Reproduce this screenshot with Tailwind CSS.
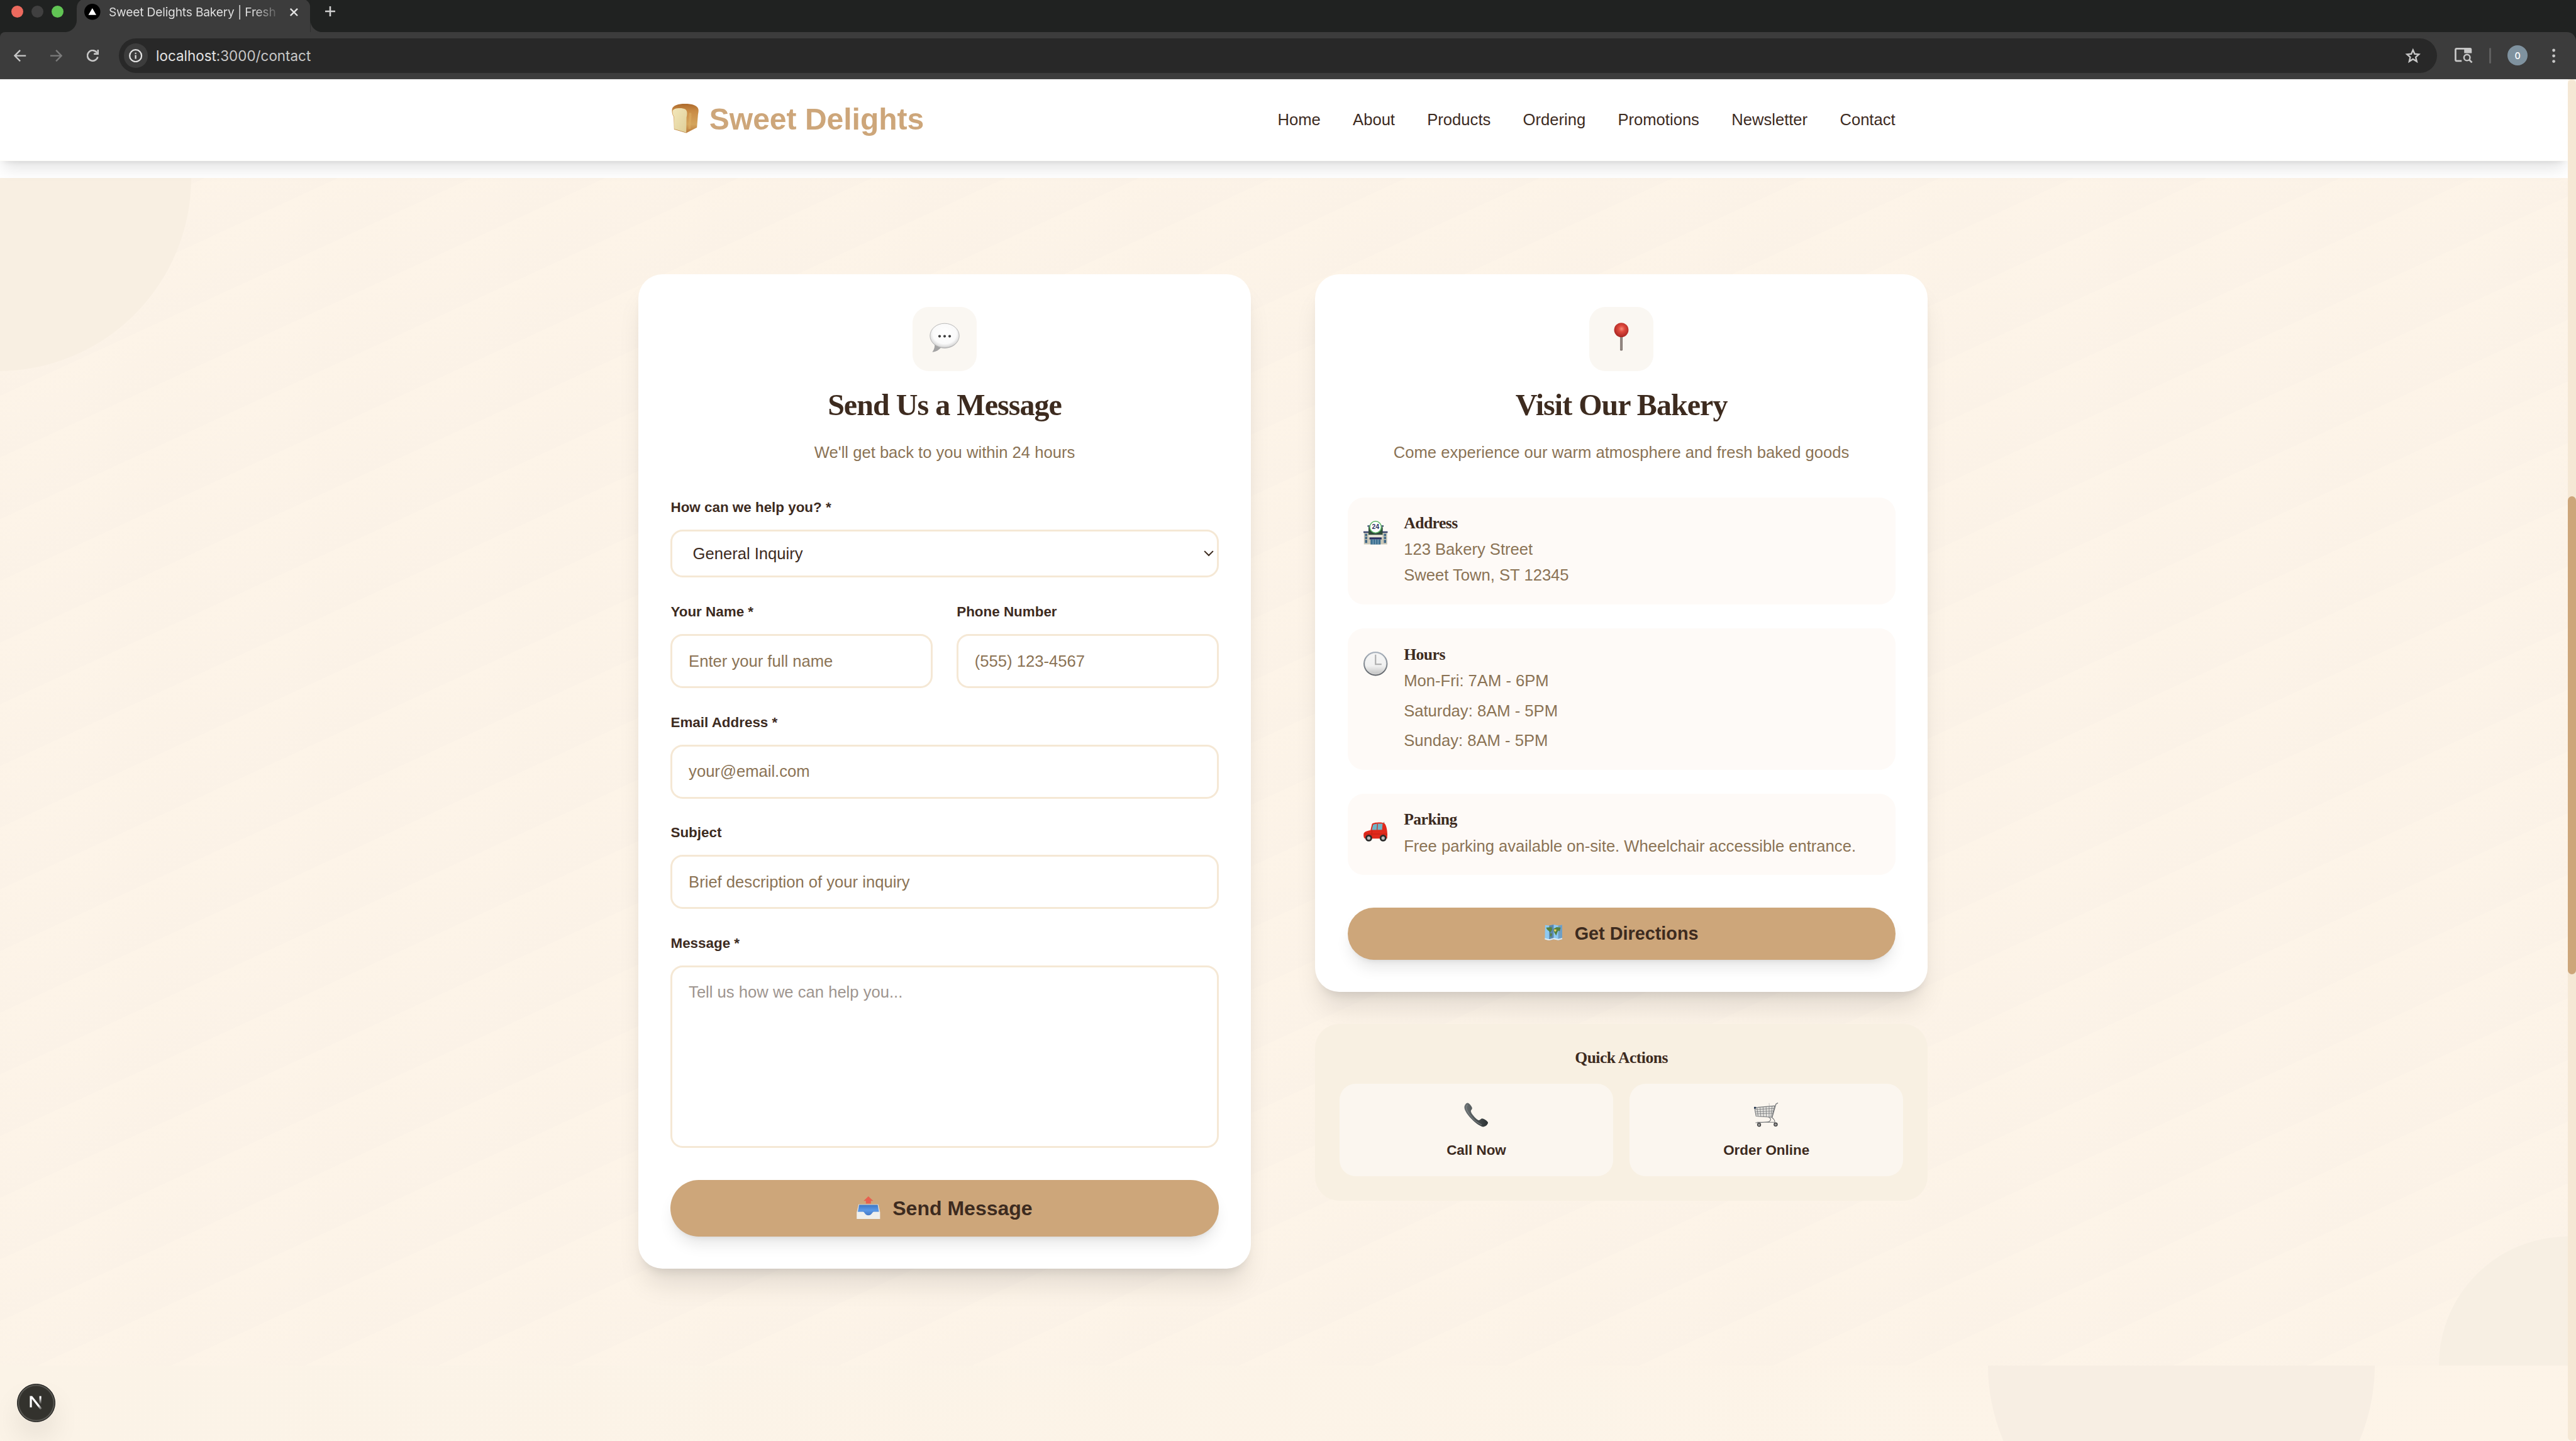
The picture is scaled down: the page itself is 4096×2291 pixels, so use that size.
<!DOCTYPE html>
<html lang="en">
<head>
<meta charset="utf-8">
<title>Sweet Delights Bakery | Fresh Baked Goods</title>
<script src="https://cdn.jsdelivr.net/npm/@tailwindcss/browser@4"></script>
</head>
<body class="overflow-hidden bg-[#fcf3e8]">
<div class="flex h-[1430.8px] w-[2558px] flex-col overflow-hidden font-['Liberation_Sans',sans-serif] text-base text-[#3d2b1f] [zoom:1.6013]">

  <!-- Browser tab strip -->
  <div class="relative flex h-8 shrink-0 items-start bg-[#202221] font-[Inter,sans-serif]">
    <div class="flex w-[76px] gap-2 pt-[5.5px] pl-[11px]">
      <span class="size-3 rounded-full bg-[#ec6a5e]"></span>
      <span class="size-3 rounded-full bg-[#404040]"></span>
      <span class="size-3 rounded-full bg-[#61c554]"></span>
    </div>
    <div class="relative h-8 w-[232px] bg-[#3c3c3c]">
      <svg class="absolute top-0 left-0 h-8 w-[232px] overflow-visible" viewBox="0 0 232 32">
        <path d="M0 0H4.2A10 10 0 0 0 0 8.2Z" fill="#202221"/>
        <path d="M232 0H227.8A10 10 0 0 1 232 8.2Z" fill="#202221"/>
        <path d="M0 20V32H-12A12 12 0 0 0 0 20Z" fill="#3c3c3c"/>
        <path d="M232 20V32H244A12 12 0 0 1 232 20Z" fill="#3c3c3c"/>
      </svg>
      <div class="relative flex h-6 items-center pl-2">
        <svg class="size-4" viewBox="0 0 16 16"><circle cx="8" cy="8" r="8" fill="#000"/><path d="M8 4.3 11.9 11.1H4.1Z" fill="#fff"/></svg>
        <div class="ml-2 w-[168px] bg-gradient-to-r from-[#e3e3e3] from-85% to-[#e3e3e3]/15 bg-clip-text text-[12px] tracking-[-0.010em] whitespace-nowrap text-transparent">Sweet Delights Bakery | Fresh</div>
        <svg class="ml-3 size-2" viewBox="0 0 8 8" fill="none" stroke="#e3e3e3" stroke-width="1.5"><path d="M.5.5l7 7M7.5.5l-7 7"/></svg>
      </div>
    </div>
    <svg class="mt-1.5 ml-[15px] size-2.5" viewBox="0 0 10 10" fill="none" stroke="#d0d0d0" stroke-width="1.6"><path d="M5 0v10M0 5h10"/></svg>
  </div>

  <!-- Browser toolbar -->
  <div class="shrink-0 bg-[#202221]">
  <div class="flex h-[47px] items-center rounded-tl-[5px] rounded-tr-[9px] border-b border-[#474747] bg-[#3c3c3c] font-[Inter,sans-serif]">
    <svg class="ml-3.5 h-3 w-3" viewBox="0 0 12 12" fill="none" stroke="#c7c7c7" stroke-width="1.5"><path d="M12 6H1M6.3.6.9 6l5.4 5.4"/></svg>
    <svg class="ml-6 h-3 w-3" viewBox="0 0 12 12" fill="none" stroke="#7b7b7b" stroke-width="1.5"><path d="M0 6h11M5.7.6 11.1 6l-5.400 5.400"/></svg>
    <svg class="ml-6 h-3 w-3" viewBox="0 0 12 12" fill="none" stroke="#c7c7c7" stroke-width="1.6"><path d="M10.900 7.200A5.200 5.200 0 1 1 10.200 3"/><path d="M11.200 0v4.200H7" stroke-width="1.7"/></svg>
    <div class="ml-5 flex h-[34px] w-[2302px] items-center rounded-full bg-[#282828] pr-[16px] pl-[5px]">
      <span class="flex size-6 items-center justify-center rounded-full bg-[#3c3c3c]">
        <svg class="size-[13.300px]" viewBox="0 0 13.300 13.300" fill="none" stroke="#e3e3e3"><circle cx="6.650" cy="6.650" r="5.900" stroke-width="1.400"/><path d="M6.650 5.900v3.800M6.650 3.600v1.300" stroke-width="1.400"/></svg>
      </span>
      <span class="ml-2 text-[14px] text-[#c7c7c7]"><span class="text-[#e3e3e3]">localhost</span>:3000/contact</span>
      <svg class="ml-auto size-4" viewBox="0 0 16 16" fill="none" stroke="#c7c7c7" stroke-width="1.500"><path d="M8 2.200 9.700 6.100 13.900 6.500 10.700 9.300 11.700 13.500 8 11.200 4.300 13.500 5.300 9.300 2.100 6.500 6.300 6.100Z"/></svg>
    </div>
    <svg class="ml-[17.500px] h-[15px] w-[18px]" viewBox="0 0 18 15" fill="none" stroke="#c7c7c7"><path d="M7 13H2A1.200 1.200 0 0 1 .900 11.900V2A1.200 1.200 0 0 1 2 .900H15.500" stroke-width="1.700"/><path d="M9.500 0H15.700A1.400 1.400 0 0 1 17 1.400V5.300H9.500Z" fill="#c7c7c7" stroke="none"/><circle cx="12.300" cy="9.700" r="3" stroke-width="1.500"/><path d="M14.500 11.900 17.200 14.600" stroke-width="1.700"/></svg>
    <span class="ml-[16.500px] h-4 w-0.5 rounded-full bg-[#5f5f5f]"></span>
    <span class="ml-4 flex size-5 items-center justify-center rounded-full bg-[#7f929f] text-[9px] font-medium text-white">0</span>
    <svg class="ml-5 h-4 w-3" viewBox="0 0 12 16" fill="#c7c7c7"><circle cx="6" cy="2.500" r="1.500"/><circle cx="6" cy="8" r="1.500"/><circle cx="6" cy="13.500" r="1.500"/></svg>
  </div>
  </div>

  <!-- Page viewport -->
  <div class="flex min-h-0 flex-1">
    <div class="relative flex w-[2550px] flex-col overflow-hidden bg-white">
      <header class="relative z-10 h-[81px] shrink-0 border-b border-[#fdfcf8] bg-white pr-0.5 pb-px shadow-[0_10px_15px_-3px_rgba(0,0,0,.12),0_4px_6px_-4px_rgba(0,0,0,.1)]">
        <div class="mx-auto flex h-full w-[1280px] items-center justify-between px-8">
          <div class="flex items-center text-[30px] leading-9 font-bold text-[#cda67a]">
            <svg class="mr-[10.300px] -mt-0.5 ml-px h-[29px] w-[27px]" viewBox="0 0 56 58" preserveAspectRatio="none">
              <defs>
                <linearGradient id="crust" x1="0" y1="0" x2="0" y2="1"><stop offset="0" stop-color="#ad6a2c"/><stop offset=".25" stop-color="#c98b45"/><stop offset=".7" stop-color="#d4a45c"/><stop offset="1" stop-color="#b9793a"/></linearGradient>
                <linearGradient id="crumb" x1="0" y1="0" x2="1" y2="1"><stop offset="0" stop-color="#f3e7bb"/><stop offset="1" stop-color="#dfcf98"/></linearGradient>
              </defs>
              <path d="M1 10C3 3 14 0 27 0 42 0 53 3 55 11 56 16 54 20 54 24L52 47 30 58 5 51 4 26C1 21 0 15 1 10Z" fill="url(#crust)"/>
              <path d="M2 14C3 8 22 7 28 11 33 14 32 22 30.500 27L30 57 5.500 50 5 26C2.500 22 1.500 18 2 14Z" fill="url(#crumb)"/>
              <path d="M38 18C39 28 36 40 37 50" stroke="#e3b568" stroke-width="5" opacity=".45" fill="none"/>
            </svg>
            <span>Sweet Delights</span>
          </div>
          <nav class="flex gap-8">
            <a>Home</a><a>About</a><a>Products</a><a>Ordering</a><a>Promotions</a><a>Newsletter</a><a>Contact</a>
          </nav>
        </div>
      </header>
      <div class="h-[16.500px] shrink-0"></div>

      <!-- Contact section -->
      <section class="relative shrink-0 overflow-hidden bg-[repeating-linear-gradient(155.200deg,#fdf4e8_-26px,#fbf2e7_29.600px)] py-24 pr-0.5">
        <div class="absolute -top-48 -left-[194px] size-96 rounded-full bg-[#f8efe2]"></div>
        <div class="absolute -right-32 -bottom-32 size-64 rounded-full bg-[#f7efe3]"></div>
        <div class="relative mx-auto grid w-[1280px] grid-cols-2 items-start gap-16">

          <!-- Message form -->
          <div class="rounded-3xl bg-white p-8 shadow-[0_20px_25px_-5px_rgba(0,0,0,.1),0_8px_10px_-6px_rgba(0,0,0,.1)]">
            <div class="mb-[30.400px] flex flex-col items-center">
              <div class="flex size-16 items-center justify-center rounded-2xl bg-[#faf7f2]">
                <svg class="-mt-0.5 h-[30px] w-[30px]" viewBox="0 0 60 60">
                  <defs><radialGradient id="bub" cx=".5" cy=".42" r=".58"><stop offset="0" stop-color="#fff"/><stop offset=".7" stop-color="#fafafa"/><stop offset=".9" stop-color="#dedede"/><stop offset="1" stop-color="#b0b0b0"/></radialGradient></defs>
                  <path d="M10 42C11 48 9 54 5.500 58.500 13 58 19 54 23 49Z" fill="#a3a3a3"/>
                  <ellipse cx="30" cy="26" rx="29" ry="24.500" fill="url(#bub)" stroke="#aaa" stroke-width="1"/>
                  <g fill="#3c3c3c"><circle cx="20" cy="27" r="2.600"/><circle cx="30" cy="27" r="2.600"/><circle cx="40" cy="27" r="2.600"/></g>
                </svg>
              </div>
              <h2 class="mt-[15.400px] font-['Liberation_Serif',serif] text-[30px] leading-9 font-bold tracking-[-0.020em]">Send Us a Message</h2>
              <p class="mt-[16.600px] leading-[25.600px] text-[#8b7355]">We'll get back to you within 24 hours</p>
            </div>
            <div class="flex flex-col gap-[22.600px]">
              <div>
                <label class="mb-[10.700px] block pt-[0.400px] text-sm leading-[22.400px] font-bold">How can we help you? *</label>
                <div class="flex h-[47.500px] items-center justify-between rounded-xl border-2 border-[#f5e8d5] pr-[3px] pl-5">
                  <span>General Inquiry</span>
                  <svg class="h-[6px] w-[10px]" viewBox="0 0 10 6" fill="none" stroke="#3d2b1f" stroke-width="1.300"><path d="M.7.7 5 5 9.300.7"/></svg>
                </div>
              </div>
              <div class="grid grid-cols-2 gap-6">
                <div>
                  <label class="mb-[10.700px] block pt-[0.400px] text-sm leading-[22.400px] font-bold">Your Name *</label>
                  <div class="flex h-[53.600px] items-center rounded-xl border-2 border-[#f5e8d5] px-4 text-[#8b7355]">Enter your full name</div>
                </div>
                <div>
                  <label class="mb-[10.700px] block pt-[0.400px] text-sm leading-[22.400px] font-bold">Phone Number</label>
                  <div class="flex h-[53.600px] items-center rounded-xl border-2 border-[#f5e8d5] px-4 text-[#8b7355]">(555) 123-4567</div>
                </div>
              </div>
              <div>
                <label class="mb-[10.700px] block pt-[0.400px] text-sm leading-[22.400px] font-bold">Email Address *</label>
                <div class="flex h-[53.600px] items-center rounded-xl border-2 border-[#f5e8d5] px-4 text-[#8b7355]">your@email.com</div>
              </div>
              <div>
                <label class="mb-[10.700px] block pt-[0.400px] text-sm leading-[22.400px] font-bold">Subject</label>
                <div class="flex h-[53.600px] items-center rounded-xl border-2 border-[#f5e8d5] px-4 text-[#8b7355]">Brief description of your inquiry</div>
              </div>
              <div>
                <label class="mb-[10.700px] block pt-[0.400px] text-sm leading-[22.400px] font-bold">Message *</label>
                <div class="h-[181.400px] rounded-xl border-2 border-[#f5e8d5] px-4 py-3 leading-[25.600px] text-[#9e958f]">Tell us how we can help you...</div>
              </div>
            </div>
            <div class="mt-[31.700px] flex h-14 items-center justify-center rounded-full bg-[#cda67a] text-xl font-bold shadow-[0_10px_15px_-3px_rgba(0,0,0,.1),0_4px_6px_-4px_rgba(0,0,0,.1)]">
              <svg class="mr-[12px] -mt-px h-[22.500px] w-[23.500px]" viewBox="0 0 47 45">
                <defs><linearGradient id="tray" x1="0" y1="0" x2="0" y2="1"><stop offset="0" stop-color="#3f78c4"/><stop offset=".5" stop-color="#5a97e6"/><stop offset="1" stop-color="#4579c6"/></linearGradient></defs>
                <path d="M4 16H43L46.500 31V45H.5V31Z" fill="#e4e4e2"/>
                <path d="M5 17H42L44.500 31 34 31C31 31 31 38 23.500 38S16 31 13 31L2.500 31Z" fill="url(#tray)"/>
                <path d="M.5 31H13C16 31 16 38 23.500 38S31 31 34 31H46.500V45H.5Z" fill="#f0efec"/>
                <path d="M23.500 0 33 9H28.500V14.500H18.500V9H14Z" fill="#e8604f"/>
              </svg>
              <span>Send Message</span>
            </div>
          </div>

          <div>
            <!-- Location card -->
            <div class="rounded-3xl bg-white p-8 shadow-[0_20px_25px_-5px_rgba(0,0,0,.1),0_8px_10px_-6px_rgba(0,0,0,.1)]">
              <div class="mb-[31.700px] flex flex-col items-center">
                <div class="flex size-16 items-center justify-center rounded-2xl bg-[#faf7f2]">
                  <svg class="-mt-1 h-[28px] w-[15px]" viewBox="0 0 30 56">
                    <defs><radialGradient id="pin" cx=".52" cy=".42" r=".6"><stop offset="0" stop-color="#f58a78"/><stop offset=".35" stop-color="#df4a3e"/><stop offset="1" stop-color="#a52320"/></radialGradient></defs>
                    <path d="M12.500 26H17.500V54A2.500 1.600 0 0 1 12.500 54Z" fill="#7d726c"/><path d="M14.500 28V54" stroke="#b8aea8" stroke-width="1.200"/>
                    <circle cx="15" cy="14.500" r="14.300" fill="url(#pin)"/>
                  </svg>
                </div>
                <h2 class="mt-[15.400px] font-['Liberation_Serif',serif] text-[30px] leading-9 font-bold tracking-[-0.020em]">Visit Our Bakery</h2>
                <p class="mt-[16.600px] leading-[25.600px] text-[#8b7355]">Come experience our warm atmosphere and fresh baked goods</p>
              </div>
              <div class="flex flex-col gap-6">
                <div class="flex gap-4 rounded-2xl bg-[#fefaf7] p-4">
                  <svg class="mt-[7.500px] size-6" viewBox="0 0 48 48">
                    <path d="M10 12H38V46H10Z" fill="#2f4a3a"/>
                    <path d="M8 9H14V12H8ZM34 9H40V12H34Z" fill="#3a4a6b"/>
                    <path d="M1 22H47V47H1Z" fill="#c9c6b6"/><path d="M0 21H11V24H0ZM37 21H48V24H37Z" fill="#39456e"/>
                    <path d="M10 14H38V28H10Z" fill="#2f4a3a"/>
                    <path d="M3 26H7.500V44H3ZM40.500 26H45V44H40.500Z" fill="#3f6787"/><path d="M3 31H8M3 37H8M40 31H46M40 37H46" stroke="#c9c6b6" stroke-width="1.500"/>
                    <path d="M10 28H38V33H10Z" fill="#e9e5d8"/><path d="M12 33H36V37H12Z" fill="#282f63"/><path d="M14 37H34V47H14Z" fill="#3c6f92"/><path d="M19 37V47M24 37V47M29 37V47" stroke="#a8c4d0" stroke-width="1"/>
                    <circle cx="24" cy="12.500" r="11.500" fill="#fff" stroke="#5cb567" stroke-width="2"/>
                    <text x="24" y="16.800" text-anchor="middle" font-family="Liberation Sans" font-weight="700" font-size="13" fill="#28315e">24</text>
                  </svg>
                  <div>
                    <h3 class="pt-[0.400px] font-['Liberation_Serif',serif] text-base leading-[19.200px] font-bold tracking-[-0.020em]">Address</h3>
                    <p class="mt-[3.600px] leading-[25.600px] text-[#8b7355]">123 Bakery Street<br>Sweet Town, ST 12345</p>
                  </div>
                </div>
                <div class="flex gap-4 rounded-2xl bg-[#fefaf7] p-4">
                  <svg class="mt-[7px] size-6" viewBox="0 0 48 48">
                    <defs><linearGradient id="rim" x1="0" y1="0" x2="0" y2="1"><stop offset="0" stop-color="#a9b3bf"/><stop offset="1" stop-color="#606368"/></linearGradient><linearGradient id="face" x1="0" y1="0" x2="0" y2="1"><stop offset="0" stop-color="#f6f6f6"/><stop offset=".6" stop-color="#f1f1f1"/><stop offset="1" stop-color="#c2c2c2"/></linearGradient></defs>
                    <circle cx="24" cy="24" r="24" fill="url(#rim)"/><circle cx="24" cy="24" r="21" fill="url(#face)" stroke="#e8e8e8" stroke-width="1"/>
                    <path d="M24 6V25H36" fill="none" stroke="#b2b2b2" stroke-width="2.800"/>
                  </svg>
                  <div class="leading-[25.600px] text-[#8b7355]">
                    <h3 class="pt-[0.400px] font-['Liberation_Serif',serif] text-base leading-[19.200px] font-bold tracking-[-0.020em] text-[#3d2b1f]">Hours</h3>
                    <p class="mt-[3.600px]">Mon-Fri: 7AM - 6PM</p>
                    <p class="mt-1">Saturday: 8AM - 5PM</p>
                    <p class="mt-1">Sunday: 8AM - 5PM</p>
                  </div>
                </div>
                <div class="flex gap-4 rounded-2xl bg-[#fefaf7] p-4">
                  <svg class="mt-[11.500px] h-[20px] w-6" viewBox="0 0 48 40">
                    <path d="M41 1 40 5" stroke="#555" stroke-width="1"/>
                    <path d="M17 5C21 1.500 38 1 42 4 46 8 47.500 20 47.500 26L47 34H3C0 33 0 27 .5 24 2 20 8 18.500 14 17.500Z" fill="#e0291c"/>
                    <path d="M19 6.500C23 4 31 4 38 4.500L37 16.500 16.500 17Z" fill="#6fb3c6"/><path d="M28 4.500 27 17" stroke="#c9281d" stroke-width="1.500"/>
                    <path d="M17 17.500 16 31M2 25H46" stroke="#b51c12" stroke-width="1.200" opacity=".7"/>
                    <circle cx="10.500" cy="33" r="6.700" fill="#2b2b2b"/><circle cx="10.500" cy="33" r="3.300" fill="#b8b8b8"/><circle cx="39" cy="33" r="6.700" fill="#2b2b2b"/><circle cx="39" cy="33" r="3.300" fill="#b8b8b8"/>
                  </svg>
                  <div>
                    <h3 class="pt-[0.400px] font-['Liberation_Serif',serif] text-base leading-[19.200px] font-bold tracking-[-0.020em]">Parking</h3>
                    <p class="mt-[3.600px] leading-[25.600px] text-[#8b7355]">Free parking available on-site. Wheelchair accessible entrance.</p>
                  </div>
                </div>
              </div>
              <div class="mt-8 flex h-[52px] items-center justify-center rounded-full bg-[#cda67a] text-lg font-bold shadow-[0_10px_15px_-3px_rgba(0,0,0,.1),0_4px_6px_-4px_rgba(0,0,0,.1)]">
                <svg class="mr-[12px] -mt-0.5 h-4 w-[18px]" viewBox="0 0 36 32">
                  <path d="M1 1 9 2 18 0 27 2 35 .5V29L27 31 18 29 9 31.500.5 29.500Z" fill="#8ec9f2"/>
                  <path d="M9 2 18 0V29L9 31.500Z" fill="#5b87ad"/><path d="M27 2 35 .5V29L27 31Z" fill="#6f9fc6"/>
                  <path d="M3 6 14 5 15 10 11 16 9 13 5 10ZM11 17 15 18 13 25 11 22ZM18 8 24 5 32 6 30 13 27 12 25 16 23 22 20 17 18 13Z" fill="#55803d"/><path d="M19 9 24 10 22 14 19 13Z" fill="#e7cf6a"/>
                  <path d="M.5 27 9 29 18 26.500 27 28.500 35 26.500V29L27 31 18 29 9 31.500.5 29.500Z" fill="#e6eef2"/>
                </svg>
                <span>Get Directions</span>
              </div>
            </div>

            <!-- Quick actions -->
            <div class="mt-8 rounded-3xl bg-[#f8efe2]/95 p-6">
              <h3 class="text-center font-['Liberation_Serif',serif] text-base leading-[19.200px] font-bold tracking-[-0.020em]">Quick Actions</h3>
              <div class="mt-4 grid grid-cols-2 gap-4">
                <div class="flex h-[92px] flex-col items-center rounded-2xl bg-[#fbf6ef] pt-[19px]">
                  <svg class="size-6" viewBox="0 0 48 48">
                    <defs><linearGradient id="ph" x1="0" y1="0" x2="1" y2="0"><stop offset="0" stop-color="#6b7173"/><stop offset="1" stop-color="#2b3133"/></linearGradient></defs>
                    <path d="M7 .5C10 .5 16 8 16 11 16 14 13.500 14 13.500 17.500 14 22 25 34.500 29 35 32 35 33 31.500 36 31.500 39 31.500 47.500 37 47.500 40 47 44 42 48 38 48 28 48 0 21 .5 9 .7 5 4 .5 7 .5Z" fill="url(#ph)"/>
                    <path d="M7 4C4 7 4 12 6 16 12 28 24 40 35 44" fill="none" stroke="#8a9092" stroke-width="1.500" opacity=".7"/>
                  </svg>
                  <span class="mt-[12px] text-sm leading-[22.400px] font-bold">Call Now</span>
                </div>
                <div class="flex h-[92px] flex-col items-center rounded-2xl bg-[#fbf6ef] pt-[19px]">
                  <svg class="size-6" viewBox="0 0 48 48" fill="none" stroke="#77797b">
                    <path d="M47.500.5 43.500 3 36 29" stroke-width="1.700"/><path d="M30 1 31 14" stroke="#bbb" stroke-width="1"/>
                    <path d="M1 10 41 6.500 35.500 29 4 27Z" fill="#e4e3df" stroke-width="1.300"/>
                    <path d="M1.500 14 40 11.500M2 18.500 39 16.500M3 22.500 37.500 21M6 10 8 27M12 9.500 13.500 27.500M18 9 19 28M24 8.500 24.500 28M30 8 30 28.500M36 7.500 33.500 28.500" stroke-width="1"/>
                    <path d="M29 29C36 32 33 38 26 38.500L3 40M35 29C40 33 42 36 41 39L6 39" stroke-width="1.400"/>
                    <circle cx="10" cy="44" r="3.200" fill="#999" stroke="#3b3b3b" stroke-width="1.600"/><circle cx="43" cy="43.500" r="3.200" fill="#999" stroke="#3b3b3b" stroke-width="1.600"/>
                    <path d="M0 8.500H4V12H0Z" fill="#24364f" stroke="none"/>
                  </svg>
                  <span class="mt-[12px] text-sm leading-[22.400px] font-bold">Order Online</span>
                </div>
              </div>
            </div>
          </div>
        </div>
      </section>

      <!-- Next section -->
      <section class="relative min-h-0 flex-1 overflow-hidden bg-[linear-gradient(155deg,#fbf3e7,#fdf4e8)]">
        <div class="absolute -top-48 left-[1974px] size-96 rounded-full bg-[#f7eee3]"></div>
      </section>

      <!-- Dev tools badge -->
      <div class="absolute bottom-[19px] left-[17px] z-20 flex size-[38px] items-center justify-center rounded-full border border-[#161616] bg-[#33322d] shadow-[inset_0_0_0_1.500px_#55544f,0_16px_32px_-8px_rgba(0,0,0,.24)]">
        <svg class="h-[15px] w-[14px]" viewBox="0 0 14 15" fill="none">
          <defs><linearGradient id="n1" x1="6" y1="6" x2="13" y2="14.500" gradientUnits="userSpaceOnUse"><stop offset=".5" stop-color="#fff"/><stop offset="1" stop-color="#fff" stop-opacity="0"/></linearGradient><linearGradient id="n2" x1="0" y1="1" x2="0" y2="9" gradientUnits="userSpaceOnUse"><stop offset=".2" stop-color="#fff"/><stop offset="1" stop-color="#fff" stop-opacity="0"/></linearGradient></defs>
          <path d="M.9 1H3.200L13 13.300 11.300 14.600 2.900 3.800V12.200H.9Z" fill="url(#n1)"/><path d="M10.400 1H12.300V9H10.400Z" fill="url(#n2)"/>
        </svg>
      </div>
    </div>

    <!-- Scrollbar -->
    <div class="w-2 bg-[#fcf6ec]">
      <div class="h-full rounded-full bg-[#f5e8d5] pt-[413.500px]"><div class="h-[475px] rounded-full bg-[#cda67a]"></div></div>
    </div>
  </div>
</div>
</body>
</html>
